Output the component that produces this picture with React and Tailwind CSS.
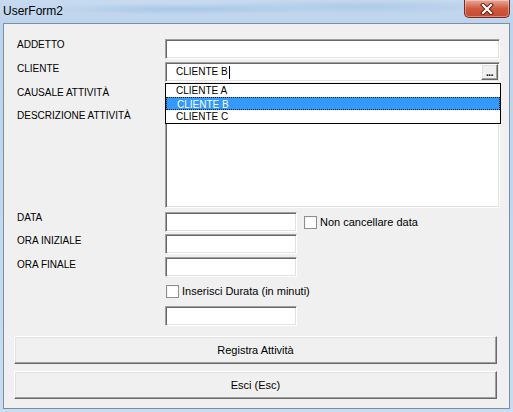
import { useState } from 'react';

// classic Win32 3D edges
const sunken =
  'bg-white border border-t-[#a0a0a0] border-l-[#a0a0a0] border-r-white border-b-white shadow-[inset_1px_1px_0_#696969,inset_-1px_-1px_0_#e3e3e3]';
const raised =
  'bg-[#f0f0f0] border border-t-white border-l-white border-r-[#696969] border-b-[#696969] shadow-[inset_-1px_-1px_0_#a0a0a0,inset_1px_1px_0_#e3e3e3]';

const CLIENTI = ['CLIENTE A', 'CLIENTE B', 'CLIENTE C'];

const Label = ({ children, className = '' }) => (
  <div className={`h-[12px] leading-[12px] text-[10px] text-black whitespace-nowrap ${className}`}>{children}</div>
);

const TextBox = ({ className = '' }) => <div className={`h-[20px] ${sunken} ${className}`} />;

const CheckBox = ({ label, className = '' }) => (
  <div className={`flex items-center ${className}`}>
    <div className="w-[13px] h-[13px] bg-white border border-[#8e8f8f] shadow-[inset_1px_1px_0_#f4f4f4]" />
    <span className="ml-[3px] text-[11px] leading-[13px] text-black whitespace-nowrap">{label}</span>
  </div>
);

const CloseButton = () => (
  <div className="absolute top-0 right-[3px] w-[46px] h-[18px] rounded-b-[5px] border border-t-0 border-[#7a2a1e] bg-gradient-to-b from-[#e9a899] via-[#cf5a3f] to-[#c44a30] shadow-[inset_0_0_0_1px_rgba(255,255,255,0.35)] flex items-center justify-center">
    <svg width="14" height="12" viewBox="0 0 14 12">
      <path d="M3 2 L11 10 M11 2 L3 10" stroke="#5a1a10" strokeWidth="4" strokeLinecap="square" />
      <path d="M3 2 L11 10 M11 2 L3 10" stroke="#ffffff" strokeWidth="2.2" strokeLinecap="square" />
    </svg>
  </div>
);

export default function App() {
  const [selected] = useState(1);

  return (
    <div className="w-[513px] h-[412px] flex flex-col bg-gradient-to-b from-[#bcd3eb] to-[#c9dcf0] font-['Liberation_Sans',Arial,sans-serif]">
      {/* Title bar */}
      <div className="relative h-[23px] shrink-0 bg-[radial-gradient(ellipse_at_35%_40%,#aac6e4,transparent_30%),radial-gradient(ellipse_at_70%_30%,#b0cae6,transparent_35%),linear-gradient(to_bottom,#c6dbf0,#bed4ec)]">
        <span className="absolute left-[3px] top-[4px] text-[12px] leading-[14px] text-black">UserForm2</span>
        <CloseButton />
      </div>

      {/* Client area */}
      <div className="mx-[3px] mb-[3px] flex-1 border border-[#7b8ea5] bg-[#f0f0f0] flex flex-col">
        <div className="flex">
          {/* labels */}
          <div className="w-[161px] pl-[13px] flex flex-col">
            <Label className="mt-[15px]">ADDETTO</Label>
            <Label className="mt-[12px]">CLIENTE</Label>
            <Label className="mt-[12px]">CAUSALE ATTIVITÀ</Label>
            <Label className="mt-[11px]">DESCRIZIONE ATTIVITÀ</Label>
            <Label className="mt-[90px]">DATA</Label>
            <Label className="mt-[11px]">ORA INIZIALE</Label>
            <Label className="mt-[12px]">ORA FINALE</Label>
          </div>

          {/* fields */}
          <div className="w-[335px] flex flex-col">
            <TextBox className="mt-[15px]" />

            <div className={`relative mt-[3px] h-[20px] ${sunken} flex items-center`}>
              <span className="ml-[10px] text-[10px] leading-[12px] text-black">CLIENTE B</span>
              <span className="ml-[1px] w-px h-[13px] bg-black" />
              <div className={`ml-auto mr-[1px] w-[17px] h-[16px] ${raised} flex items-end justify-center pb-[2px]`}>
                <span className="text-[10px] leading-[8px] font-bold text-black tracking-[-0.5px]">...</span>
              </div>

              {/* open dropdown list */}
              <div className="absolute left-[-1px] top-[20px] w-[336px] z-10 bg-white border border-black flex flex-col">
                {CLIENTI.map((c, i) => (
                  <div
                    key={c}
                    className={`h-[13px] pl-[10px] text-[10px] leading-[13px] ${
                      i === selected
                        ? 'bg-[#3399ff] text-white border border-dotted border-[#1b1b1b] pl-[9px] leading-[11px]'
                        : 'text-black'
                    }`}
                  >
                    {c}
                  </div>
                ))}
              </div>
            </div>

            <div className={`mt-[2px] h-[124px] ${sunken}`} />

            <div className="mt-[4px] flex items-center">
              <TextBox className="w-[132px]" />
              <CheckBox label="Non cancellare data" className="ml-[7px]" />
            </div>
            <TextBox className="mt-[2px] w-[132px]" />
            <TextBox className="mt-[3px] w-[132px]" />
          </div>
        </div>

        <div className="pl-[162px] flex flex-col">
          <CheckBox label="Inserisci Durata (in minuti)" className="mt-[8px]" />
          <TextBox className="mt-[8px] w-[132px] -ml-[1px]" />
        </div>

        <div className="px-[10px] flex flex-col">
          <button className={`mt-[10px] h-[28px] w-[483px] ${raised} text-[11px] text-black`}>Registra Attività</button>
          <button className={`mt-[7px] h-[28px] w-[483px] ${raised} text-[11px] text-black`}>Esci (Esc)</button>
        </div>
      </div>
    </div>
  );
}
